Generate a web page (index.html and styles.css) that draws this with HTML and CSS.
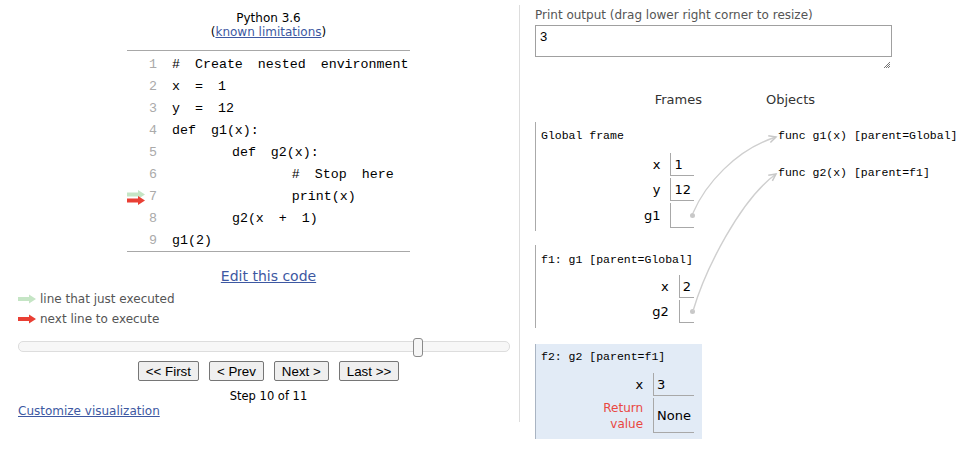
FILE: index.html
```html
<!DOCTYPE html>
<html>
<head>
<meta charset="utf-8">
<title>Python Tutor</title>
<link rel="stylesheet" href="styles.css">
</head>
<body>
<div class="page">
  <div class="left">
    <div class="lang">Python 3.6<br>(<a href="#">known limitations</a>)</div>
    <div class="code">
      <div class="row"><span class="gut"></span><span class="num">1</span><span class="src"># Create nested environment</span></div>
      <div class="row"><span class="gut"></span><span class="num">2</span><span class="src">x = 1</span></div>
      <div class="row"><span class="gut"></span><span class="num">3</span><span class="src">y = 12</span></div>
      <div class="row"><span class="gut"></span><span class="num">4</span><span class="src">def g1(x):</span></div>
      <div class="row"><span class="gut"></span><span class="num">5</span><span class="src">    def g2(x):</span></div>
      <div class="row"><span class="gut"></span><span class="num">6</span><span class="src">        # Stop here</span></div>
      <div class="row"><span class="gut"><svg class="gutarrows" width="20" height="22" viewBox="0 0 20 22"><path d="M0 7.5 H11 V5 L18 9.5 L11 14 V11.5 H0 Z" fill="#c5e5c5"/><path d="M0 13.5 H11 V11 L18 15.5 L11 20 V17.5 H0 Z" fill="#e93f34"/></svg></span><span class="num">7</span><span class="src">        print(x)</span></div>
      <div class="row"><span class="gut"></span><span class="num">8</span><span class="src">    g2(x + 1)</span></div>
      <div class="row"><span class="gut"></span><span class="num">9</span><span class="src">g1(2)</span></div>
    </div>
    <div class="edit"><a href="#">Edit this code</a></div>
    <div class="legend">
      <div class="leg"><svg width="18" height="10" viewBox="0 0 18 10"><path d="M0 3 H11 V0.5 L18 5 L11 9.5 V7 H0 Z" fill="#c5e5c5"/></svg><span>line that just executed</span></div>
      <div class="leg"><svg width="18" height="10" viewBox="0 0 18 10"><path d="M0 3 H11 V0.5 L18 5 L11 9.5 V7 H0 Z" fill="#e93f34"/></svg><span>next line to execute</span></div>
    </div>
    <div class="slider"><div class="thumb"></div></div>
    <div class="buttons">
      <button class="btn">&lt;&lt; First</button>
      <button class="btn">&lt; Prev</button>
      <button class="btn">Next &gt;</button>
      <button class="btn">Last &gt;&gt;</button>
    </div>
    <div class="step">Step 10 of 11</div>
    <div class="custom"><a href="#">Customize visualization</a></div>
  </div>

  <div class="right">
    <div class="plabel">Print output (drag lower right corner to resize)</div>
    <div class="out">3</div>
    <div class="grip"><svg width="8" height="8" viewBox="0 0 8 8"><path d="M7 1 L1 7 M7 3 L3 7 M7 5 L5 7" stroke="#777" stroke-width="1"/></svg></div>
    <div class="heads"><div class="hframes">Frames</div><div class="hobjects">Objects</div></div>
    <div class="viz">
      <div class="frames">
        <div class="frame f-global">
          <div class="flabel">Global frame</div>
          <div class="vars">
            <div class="vn">x</div><div class="vv">1</div>
            <div class="vn">y</div><div class="vv">12</div>
            <div class="vn">g1</div><div class="vv tall"><span class="dot"></span></div>
          </div>
        </div>
        <div class="frame f-one">
          <div class="flabel">f1: g1 [parent=Global]</div>
          <div class="vars">
            <div class="vn">x</div><div class="vv">2</div>
            <div class="vn">g2</div><div class="vv"><span class="dot"></span></div>
          </div>
        </div>
        <div class="frame f-two">
          <div class="flabel">f2: g2 [parent=f1]</div>
          <div class="vars">
            <div class="vn">x</div><div class="vv">3</div>
            <div class="vn ret">Return<br>value</div><div class="vv retv">None</div>
          </div>
        </div>
      </div>
      <div class="objects">
        <div class="obj">func g1(x) [parent=Global]</div>
        <div class="obj second">func g2(x) [parent=f1]</div>
      </div>
    </div>
  </div>
</div>
<svg class="links" width="971" height="453" viewBox="0 0 971 453">
  <defs>
    <marker id="ah" markerWidth="10" markerHeight="10" refX="8" refY="4" orient="auto" markerUnits="userSpaceOnUse">
      <path d="M1 0.5 L8 4 L1 7.5" fill="none" stroke="#c8c8c8" stroke-width="1.5"/>
    </marker>
  </defs>
  <path d="M693 213 C705 185 735 150 776 137" fill="none" stroke="#cfcfcf" stroke-width="1.4" marker-end="url(#ah)"/>
  <path d="M693 311 C705 270 740 200 776 174" fill="none" stroke="#cfcfcf" stroke-width="1.4" marker-end="url(#ah)"/>
</svg>
</body>
</html>
```

FILE: styles.css
```css
* { box-sizing: border-box; }

body {
  margin: 0;
  font-family: "DejaVu Sans", Verdana, sans-serif;
  font-size: 12px;
  color: #000;
  background: #fff;
}

a { color: #3d58a2; }

.page {
  display: flex;
  align-items: flex-start;
  padding-left: 8px;
}

/* ---------- left panel ---------- */
.left {
  width: 512px;
  margin-top: 5px;
  padding: 6px 0 4px 10px;
  border-right: 1px solid #ddd;
}

.lang {
  text-align: center;
  line-height: 14px;
}

.code {
  width: 283px;
  margin: 11px auto 0;
  padding-top: 3px;
  border-top: 1px solid #a8a8a8;
  border-bottom: 1px solid #a8a8a8;
  font-family: "Liberation Mono", "Courier New", monospace;
  font-size: 13.3px;
}

.row {
  display: flex;
  align-items: center;
  height: 21.9px;
}

.gut {
  width: 20px;
  height: 100%;
  flex: none;
  position: relative;
}

.gutarrows {
  position: absolute;
  left: 0;
  top: 0;
}

.num {
  width: 10px;
  flex: none;
  text-align: right;
  color: #aaa;
}

.src {
  padding-left: 15px;
  white-space: pre;
  word-spacing: 7px;
}

.edit {
  margin-top: 15px;
  text-align: center;
  font-size: 14px;
  line-height: 18px;
}

.legend {
  margin-top: 4px;
  color: #555;
}

.leg {
  display: flex;
  align-items: center;
  gap: 4px;
  height: 20px;
}

.leg svg { flex: none; }

.slider {
  position: relative;
  margin-top: 12px;
  width: 492px;
  height: 11px;
  border: 1px solid #ddd;
  border-radius: 5px;
  background: #f7f7f7;
}

.thumb {
  position: absolute;
  left: 394px;
  top: -4px;
  width: 10px;
  height: 19px;
  border: 1px solid #8a8a8a;
  border-radius: 3px;
  background: #f6f6f6;
}

.buttons {
  margin-top: 9px;
  display: flex;
  justify-content: center;
  gap: 10px;
}

.btn {
  height: 20px;
  padding: 0 7px;
  font-family: "Liberation Sans", Arial, sans-serif;
  font-size: 13.33px;
  color: #000;
  background: #efefef;
  border: 1px solid #767676;
  border-radius: 2px;
}

.step {
  margin-top: 8px;
  text-align: center;
  font-size: 11.5px;
  line-height: 14px;
}

.custom {
  margin-top: 1px;
  line-height: 14px;
}

/* ---------- right panel ---------- */
.right {
  margin-left: 15px;
  padding-top: 8px;
}

.plabel {
  color: #555;
  line-height: 14px;
}

.out {
  margin-top: 3px;
  width: 357px;
  height: 32px;
  border: 1px solid #a0a0a0;
  padding: 3px 4px;
  font-family: "Liberation Sans", Arial, sans-serif;
  font-size: 13px;
  line-height: 15px;
}

.grip {
  width: 357px;
  height: 12px;
  display: flex;
  justify-content: flex-end;
  align-items: flex-end;
  padding-right: 1px;
}

.heads {
  margin-top: 24px;
  display: flex;
  font-size: 13px;
  line-height: 14px;
  color: #333;
}

.hframes {
  width: 167px;
  text-align: right;
}

.hobjects {
  margin-left: 64px;
}

.viz {
  margin-top: 15px;
  display: flex;
  align-items: flex-start;
}

.frames {
  width: 167px;
  flex: none;
}

.frame {
  border-left: 1px solid #aaa;
  padding: 7px 8px 3px 5px;
}

.flabel {
  font-family: "Liberation Mono", "Courier New", monospace;
  font-size: 11.5px;
  line-height: 14px;
  white-space: pre;
}

.vars {
  display: grid;
  grid-template-columns: auto auto;
  justify-content: end;
  row-gap: 2px;
  margin-top: 10px;
  font-size: 13px;
}

.vn {
  align-self: center;
  text-align: right;
  padding-right: 10px;
}

.vv {
  display: flex;
  align-items: center;
  height: 23px;
  padding: 0 3px;
  border-left: 1px solid #a8a8a8;
  border-bottom: 1px solid #a8a8a8;
}

.vv.tall { height: 25px; }

.dot {
  width: 5px;
  height: 5px;
  border-radius: 50%;
  background: #c8c8c8;
  margin-left: auto;
  margin-right: -4px;
}

.f-one {
  margin-top: 14px;
  padding-top: 8px;
  padding-bottom: 5px;
}

.f-one .vars { margin-top: 8px; }

.f-two {
  margin-top: 16px;
  padding-top: 6px;
  padding-bottom: 6px;
  background: #e2ebf6;
  border-left-color: #a9b4c2;
}

.f-two .vars { margin-top: 9px; }

.ret {
  color: #e9473f;
  font-size: 12px;
  line-height: 16px;
}

.vv.retv { height: 35px; }

.objects {
  margin-left: 76px;
  padding-top: 7px;
}

.obj {
  font-family: "Liberation Mono", "Courier New", monospace;
  font-size: 11.5px;
  line-height: 14px;
  white-space: pre;
}

.obj.second { margin-top: 23px; }

.links {
  position: absolute;
  left: 0;
  top: 0;
  pointer-events: none;
}
```
